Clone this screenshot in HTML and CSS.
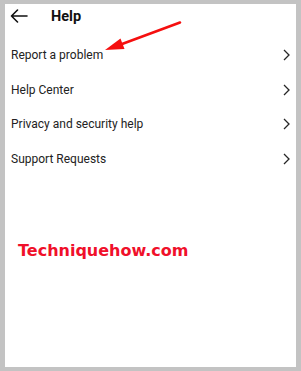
FILE: index.html
```html
<!DOCTYPE html>
<html>
<head>
<meta charset="utf-8">
<link rel="stylesheet" href="styles.css">
</head>
<body>
<div class="panel">
  <div class="header">
    <svg class="back" width="18" height="14" viewBox="0 0 18 14"><path d="M17 7 H1.5 M7.5 1 L1.5 7 L7.5 13" fill="none" stroke="#111" stroke-width="1.6" stroke-linecap="round" stroke-linejoin="round"/></svg>
    <span class="title">Help</span>
  </div>
  <div class="list">
    <div class="row"><span>Report a problem</span><svg class="chev" width="7" height="12" viewBox="0 0 7 12"><path d="M1 1 L6 6 L1 11" fill="none" stroke="#262626" stroke-width="1.3"/></svg></div>
    <div class="row"><span>Help Center</span><svg class="chev" width="7" height="12" viewBox="0 0 7 12"><path d="M1 1 L6 6 L1 11" fill="none" stroke="#262626" stroke-width="1.3"/></svg></div>
    <div class="row"><span>Privacy and security help</span><svg class="chev" width="7" height="12" viewBox="0 0 7 12"><path d="M1 1 L6 6 L1 11" fill="none" stroke="#262626" stroke-width="1.3"/></svg></div>
    <div class="row"><span>Support Requests</span><svg class="chev" width="7" height="12" viewBox="0 0 7 12"><path d="M1 1 L6 6 L1 11" fill="none" stroke="#262626" stroke-width="1.3"/></svg></div>
  </div>
  <div class="brand">Techniquehow.com</div>
  <svg class="pointer" width="291" height="80" viewBox="5 4 291 80"><path d="M180 22.5 L118 45.5" stroke="#f50f0f" stroke-width="2.6" stroke-linecap="round"/><path d="M105 50 L120.5 38.5 L124.5 49 Z" fill="#f50f0f"/></svg>
</div>
</body>
</html>
```

FILE: styles.css
```css
html, body {
  margin: 0;
  padding: 0;
}
body {
  background: #c3c3c3;
  width: 301px;
  height: 371px;
  padding: 4px 5px 4px 5px;
  box-sizing: border-box;
  font-family: Roboto, "Liberation Sans", sans-serif;
}
.panel {
  position: relative;
  background: #fff;
  height: 363px;
  width: 291px;
}
.header {
  display: flex;
  align-items: center;
  height: 24px;
  padding-left: 5px;
}
.back {
  display: block;
}
.title {
  margin-left: 23px;
  font-weight: 700;
  font-size: 14.5px;
  color: #111;
}
.list {
  padding-top: 9.75px;
}
.row {
  display: flex;
  align-items: center;
  justify-content: space-between;
  height: 34.5px;
  padding: 0 6px 0 6px;
  font-size: 12px;
  color: #222;
}
.chev {
  display: block;
}
.brand {
  margin-top: 64.75px;
  margin-left: 13px;
  font-family: "DejaVu Sans", Verdana, sans-serif;
  font-weight: 700;
  font-size: 16px;
  line-height: 20px;
  color: #f0102a;
}
.pointer {
  position: absolute;
  left: 0;
  top: 0;
}
```
